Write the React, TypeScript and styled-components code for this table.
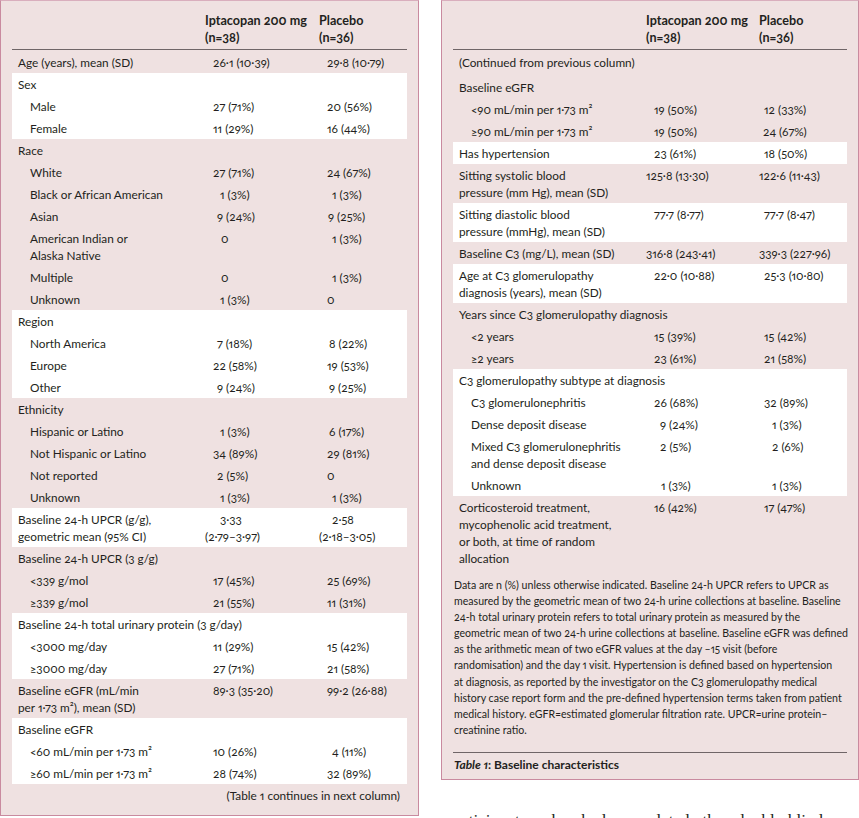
import React from "react";
import styled, { createGlobalStyle } from "styled-components";

const GlobalStyle = createGlobalStyle`
  html, body { margin: 0; padding: 0; background: #ffffff; }
  body {
    font-family: Lato, "Noto Sans", sans-serif;
    color: #231f20;
    -webkit-font-smoothing: antialiased;
  }
`;

type Line = { t: string; s: number };
type Cell = Line[];
type RowData = { label: string[]; sub?: boolean; a?: Cell; b?: Cell; extra?: number };
type Group = { white?: boolean; rows: RowData[] };

const v = (t: string, s: number): Cell => [{ t, s }];

const leftGroups: Group[] = [
  { rows: [{ label: ["Age (years), mean (SD)"], a: v("26·1 (10·39)", 8), b: v("29·8 (10·79)", 8) }] },
  {
    white: true,
    rows: [
      { label: ["Sex"] },
      { label: ["Male"], sub: true, a: v("27 (71%)", 8), b: v("20 (56%)", 8) },
      { label: ["Female"], sub: true, a: v("11 (29%)", 8), b: v("16 (44%)", 8) },
    ],
  },
  {
    rows: [
      { label: ["Race"] },
      { label: ["White"], sub: true, a: v("27 (71%)", 8), b: v("24 (67%)", 8) },
      { label: ["Black or African American"], sub: true, a: v("1 (3%)", 15), b: v("1 (3%)", 13) },
      { label: ["Asian"], sub: true, a: v("9 (24%)", 12), b: v("9 (25%)", 9) },
      { label: ["American Indian or", "Alaska Native"], sub: true, a: v("0", 16), b: v("1 (3%)", 13) },
      { label: ["Multiple"], sub: true, a: v("0", 16), b: v("1 (3%)", 13) },
      { label: ["Unknown"], sub: true, a: v("1 (3%)", 15), b: v("0", 8) },
    ],
  },
  {
    white: true,
    rows: [
      { label: ["Region"] },
      { label: ["North America"], sub: true, a: v("7 (18%)", 12), b: v("8 (22%)", 10) },
      { label: ["Europe"], sub: true, a: v("22 (58%)", 8), b: v("19 (53%)", 8) },
      { label: ["Other"], sub: true, a: v("9 (24%)", 12), b: v("9 (25%)", 10) },
    ],
  },
  {
    rows: [
      { label: ["Ethnicity"] },
      { label: ["Hispanic or Latino"], sub: true, a: v("1 (3%)", 15), b: v("6 (17%)", 10) },
      { label: ["Not Hispanic or Latino"], sub: true, a: v("34 (89%)", 8), b: v("29 (81%)", 8) },
      { label: ["Not reported"], sub: true, a: v("2 (5%)", 12), b: v("0", 8) },
      { label: ["Unknown"], sub: true, a: v("1 (3%)", 15), b: v("1 (3%)", 13) },
    ],
  },
  {
    white: true,
    rows: [
      {
        label: ["Baseline 24-h UPCR (g/g),", "geometric mean (95% CI)"],
        a: [{ t: "3·33", s: 15 }, { t: "(2·79–3·97)", s: -1 }],
        b: [{ t: "2·58", s: 13 }, { t: "(2·18–3·05)", s: 0 }],
      },
    ],
  },
  {
    rows: [
      { label: ["Baseline 24-h UPCR (3 g/g)"] },
      { label: ["<339 g/mol"], sub: true, a: v("17 (45%)", 8), b: v("25 (69%)", 8) },
      { label: ["≥339 g/mol"], sub: true, a: v("21 (55%)", 8), b: v("11 (31%)", 8) },
    ],
  },
  {
    white: true,
    rows: [
      { label: ["Baseline 24-h total urinary protein (3 g/day)"] },
      { label: ["<3000 mg/day"], sub: true, a: v("11 (29%)", 8), b: v("15 (42%)", 8) },
      { label: ["≥3000 mg/day"], sub: true, a: v("27 (71%)", 8), b: v("21 (58%)", 8) },
    ],
  },
  {
    rows: [
      {
        label: ["Baseline eGFR (mL/min", "per 1·73 m²), mean (SD)"],
        a: v("89·3 (35·20)", 8),
        b: v("99·2 (26·88)", 8),
      },
    ],
  },
  {
    white: true,
    rows: [
      { label: ["Baseline eGFR"] },
      { label: ["<60 mL/min per 1·73 m²"], sub: true, a: v("10 (26%)", 8), b: v("4 (11%)", 13) },
      { label: ["≥60 mL/min per 1·73 m²"], sub: true, a: v("28 (74%)", 8), b: v("32 (89%)", 8) },
    ],
  },
];

const rightGroups: Group[] = [
  {
    rows: [
      { label: ["(Continued from previous column)"], extra: 3 },
      { label: ["Baseline eGFR"] },
      { label: ["<90 mL/min per 1·73 m²"], sub: true, a: v("19 (50%)", 8), b: v("12 (33%)", 5) },
      { label: ["≥90 mL/min per 1·73 m²"], sub: true, a: v("19 (50%)", 8), b: v("24 (67%)", 4) },
    ],
  },
  { white: true, rows: [{ label: ["Has hypertension"], a: v("23 (61%)", 8), b: v("18 (50%)", 5) }] },
  {
    rows: [
      {
        label: ["Sitting systolic blood", "pressure (mm Hg), mean (SD)"],
        a: v("125·8 (13·30)", 0),
        b: v("122·6 (11·43)", 0),
      },
    ],
  },
  {
    white: true,
    rows: [
      {
        label: ["Sitting diastolic blood", "pressure (mmHg), mean (SD)"],
        a: v("77·7 (8·77)", 8),
        b: v("77·7 (8·47)", 5),
      },
    ],
  },
  { rows: [{ label: ["Baseline C3 (mg/L), mean (SD)"], a: v("316·8 (243·41)", 0), b: v("339·3 (227·96)", 0) }] },
  {
    white: true,
    rows: [
      {
        label: ["Age at C3 glomerulopathy", "diagnosis (years), mean (SD)"],
        a: v("22·0 (10·88)", 8),
        b: v("25·3 (10·80)", 5),
      },
    ],
  },
  {
    rows: [
      { label: ["Years since C3 glomerulopathy diagnosis"] },
      { label: ["<2 years"], sub: true, a: v("15 (39%)", 8), b: v("15 (42%)", 5) },
      { label: ["≥2 years"], sub: true, a: v("23 (61%)", 8), b: v("21 (58%)", 5) },
    ],
  },
  {
    white: true,
    rows: [
      { label: ["C3 glomerulopathy subtype at diagnosis"] },
      { label: ["C3 glomerulonephritis"], sub: true, a: v("26 (68%)", 8), b: v("32 (89%)", 5) },
      { label: ["Dense deposit disease"], sub: true, a: v("9 (24%)", 14), b: v("1 (3%)", 13) },
      {
        label: ["Mixed C3 glomerulonephritis", "and dense deposit disease"],
        sub: true,
        a: v("2 (5%)", 14),
        b: v("2 (6%)", 13),
      },
      { label: ["Unknown"], sub: true, a: v("1 (3%)", 15), b: v("1 (3%)", 13) },
    ],
  },
  {
    rows: [
      {
        label: ["Corticosteroid treatment,", "mycophenolic acid treatment,", "or both, at time of random", "allocation"],
        a: v("16 (42%)", 8),
        b: v("17 (47%)", 5),
      },
    ],
  },
];

const footnoteLines = [
  "Data are n (%) unless otherwise indicated. Baseline 24-h UPCR refers to UPCR as",
  "measured by the geometric mean of two 24-h urine collections at baseline. Baseline",
  "24-h total urinary protein refers to total urinary protein as measured by the",
  "geometric mean of two 24-h urine collections at baseline. Baseline eGFR was defined",
  "as the arithmetic mean of two eGFR values at the day –15 visit (before",
  "randomisation) and the day 1 visit. Hypertension is defined based on hypertension",
  "at diagnosis, as reported by the investigator on the C3 glomerulopathy medical",
  "history case report form and the pre-defined hypertension terms taken from patient",
  "medical history. eGFR=estimated glomerular filtration rate. UPCR=urine protein–",
  "creatinine ratio.",
];

const Page = styled.div`
  display: flex;
  align-items: flex-start;
  gap: 22px;
  width: 859px;
  height: 818px;
  overflow: hidden;
`;

const Column = styled.div`
  display: flex;
  flex-direction: column;
`;

const Panel = styled.section<{ $w: number }>`
  box-sizing: border-box;
  width: ${(p) => p.$w}px;
  background: #efe1e1;
  border: 1px solid #c98a9f;
  border-top: 1px solid #d9aebd;
  padding: 11px 11px 0 11px;
  font-size: 11.8px;
  line-height: 17px;
  font-feature-settings: "onum" 1, "pnum" 1;
`;

const LeftPanel = styled(Panel)`
  padding-bottom: 11px;
`;

const RightPanel = styled(Panel)`
  padding-bottom: 6px;
`;

const HeaderRow = styled.div<{ $c2: number }>`
  display: grid;
  grid-template-columns: 193px ${(p) => p.$c2}px 1fr;
  font-weight: 700;
  font-size: 12.6px;
  padding-bottom: 3px;
  border-bottom: 1px solid #6f6567;
  margin-bottom: 1px;
`;

const Band = styled.div<{ $white?: boolean }>`
  background: ${(p) => (p.$white ? "#ffffff" : "transparent")};
`;

const Row = styled.div<{ $c2: number; $extra?: number }>`
  display: grid;
  grid-template-columns: 193px ${(p) => p.$c2}px 1fr;
  padding: 2.5px 0 ${(p) => 2.5 + (p.$extra || 0)}px;
`;

const Label = styled.div<{ $sub?: boolean; $span?: boolean }>`
  padding-left: ${(p) => (p.$sub ? 18 : 6)}px;
  grid-column: ${(p) => (p.$span ? "1 / -1" : "auto")};
  white-space: nowrap;
`;

const Value = styled.div`
  white-space: nowrap;
`;

const ValueLine = styled.div<{ $shift: number }>`
  padding-left: ${(p) => p.$shift}px;
`;

const ContinueNote = styled.div`
  text-align: right;
  padding-right: 7px;
  margin-top: 3px;
`;

const Footnote = styled.div`
  margin-top: 8px;
  padding-left: 1px;
  font-size: 10.6px;
  line-height: 16.1px;
  white-space: nowrap;
`;

const Caption = styled.div`
  margin-top: 14px;
  border-top: 1px solid #6f6567;
  padding: 3px 0 0 1px;
  font-weight: 700;
  font-size: 12px;
  line-height: 17px;
  em {
    font-style: italic;
  }
`;

const BodyText = styled.p`
  margin: 31px 36px 0 6px;
  font-family: "Liberation Serif", serif;
  font-size: 17px;
  line-height: 20px;
  text-align: justify;
  text-align-last: justify;
  color: #231f20;
`;

function CellView({ cell }: { cell?: Cell }) {
  return (
    <Value>
      {(cell || []).map((l, i) => (
        <ValueLine key={i} $shift={l.s}>
          {l.t}
        </ValueLine>
      ))}
    </Value>
  );
}

function Table({ groups, c2 }: { groups: Group[]; c2: number }) {
  return (
    <div>
      <HeaderRow $c2={c2}>
        <div />
        <div>
          Iptacopan 200 mg
          <br />
          (n=38)
        </div>
        <div>
          Placebo
          <br />
          (n=36)
        </div>
      </HeaderRow>
      {groups.map((g, gi) => (
        <Band key={gi} $white={g.white}>
          {g.rows.map((r, ri) => {
            const span = !r.a && !r.b;
            return (
              <Row key={ri} $c2={c2} $extra={r.extra}>
                <Label $sub={r.sub} $span={span}>
                  {r.label.map((l, li) => (
                    <div key={li}>{l}</div>
                  ))}
                </Label>
                {!span && <CellView cell={r.a} />}
                {!span && <CellView cell={r.b} />}
              </Row>
            );
          })}
        </Band>
      ))}
    </div>
  );
}

export default function App() {
  return (
    <>
      <GlobalStyle />
      <Page>
        <LeftPanel $w={419}>
          <Table groups={leftGroups} c2={114} />
          <ContinueNote>(Table 1 continues in next column)</ContinueNote>
        </LeftPanel>
        <Column>
          <RightPanel $w={418}>
            <Table groups={rightGroups} c2={113} />
            <Footnote>
              {footnoteLines.map((l, i) => (
                <div key={i}>{l}</div>
              ))}
            </Footnote>
            <Caption>
              <em>Table 1</em>: Baseline characteristics
            </Caption>
          </RightPanel>
          <BodyText>participants who had completed the double-blind</BodyText>
        </Column>
      </Page>
    </>
  );
}
